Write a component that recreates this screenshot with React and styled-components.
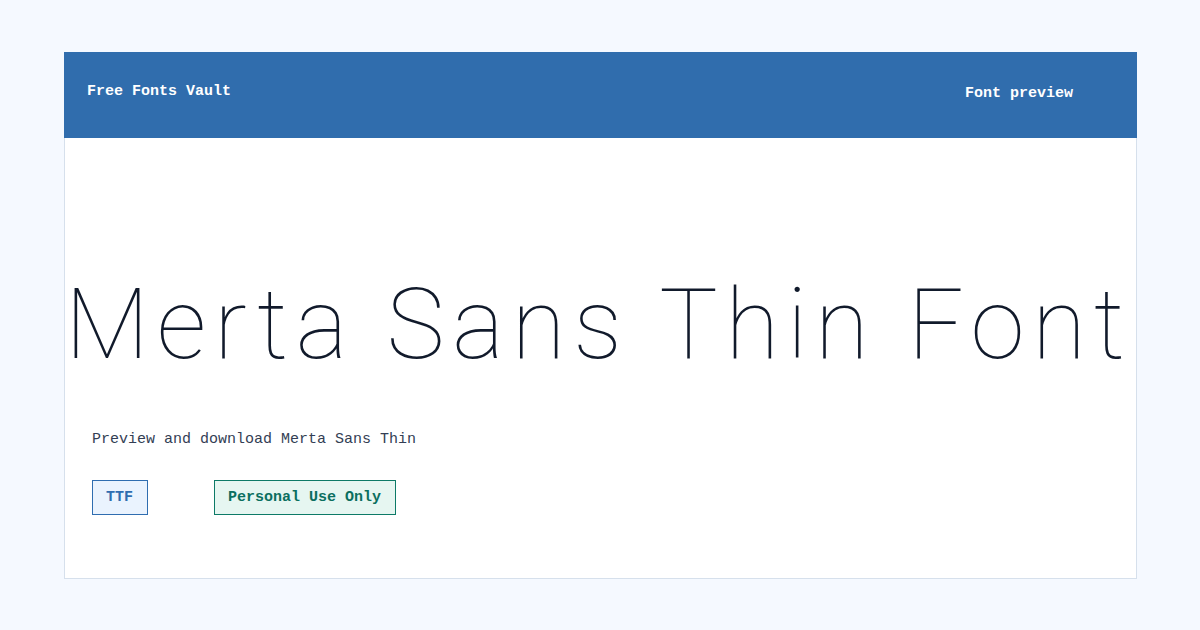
import styled, { createGlobalStyle } from "styled-components"

const Global = createGlobalStyle`
  html, body {
    margin: 0;
    padding: 0;
    background: #f5f9ff;
  }
  body {
    font-family: "Liberation Mono", "DejaVu Sans Mono", monospace;
  }
`

const Page = styled.div`
  width: 1200px;
  height: 630px;
  box-sizing: border-box;
  padding: 52px 63px 52px 64px;
`

const Card = styled.div`
  height: 527px;
  box-sizing: border-box;
  background: #ffffff;
  border: 1px solid #d6e0ec;
  border-top: none;
  display: flex;
  flex-direction: column;
`

const Header = styled.header`
  height: 86px;
  flex-shrink: 0;
  background: #306dad;
  display: flex;
  align-items: center;
  justify-content: space-between;
  padding: 0 64px 0 23px;
  margin: 0 -1px;
  color: #ffffff;
  font-size: 15px;
  font-weight: bold;
`

const Brand = styled.div`
  margin-top: -7px;
`

const Nav = styled.div`
  margin-top: -3px;
`

const Title = styled.h1`
  margin: 138px 0 0 0;
  font-family: Roboto, "Liberation Sans", sans-serif;
  font-weight: 100;
  font-size: 98px;
  line-height: 1;
  letter-spacing: 7.8px;
  color: #111a2b;
  white-space: nowrap;
`

const Body = styled.div`
  padding: 0 27px;
  display: flex;
  flex-direction: column;
`

const Lead = styled.p`
  margin: 57px 0 0;
  font-size: 15px;
  color: #333e54;
`

const Badges = styled.div`
  display: flex;
  gap: 66px;
  margin-top: 32px;
`

const Badge = styled.span`
  height: 35px;
  box-sizing: border-box;
  padding: 0 14px 0 13px;
  display: flex;
  align-items: center;
  font-size: 15px;
  font-weight: bold;
  border: 1px solid ${p => p.$tone === "green" ? "#0d7a67" : "#2f6db0"};
  background: ${p => p.$tone === "green" ? "#e6f6f1" : "#eaf3fe"};
  color: ${p => p.$tone === "green" ? "#0b6f5f" : "#2f6db0"};
`

export default function App() {
  return (
    <>
      <Global />
      <Page>
        <Card>
          <Header>
            <Brand>Free Fonts Vault</Brand>
            <Nav>Font preview</Nav>
          </Header>
          <Title>Merta Sans Thin Font</Title>
          <Body>
            <Lead>Preview and download Merta Sans Thin</Lead>
            <Badges>
              <Badge>TTF</Badge>
              <Badge $tone="green">Personal Use Only</Badge>
            </Badges>
          </Body>
        </Card>
      </Page>
    </>
  )
}
